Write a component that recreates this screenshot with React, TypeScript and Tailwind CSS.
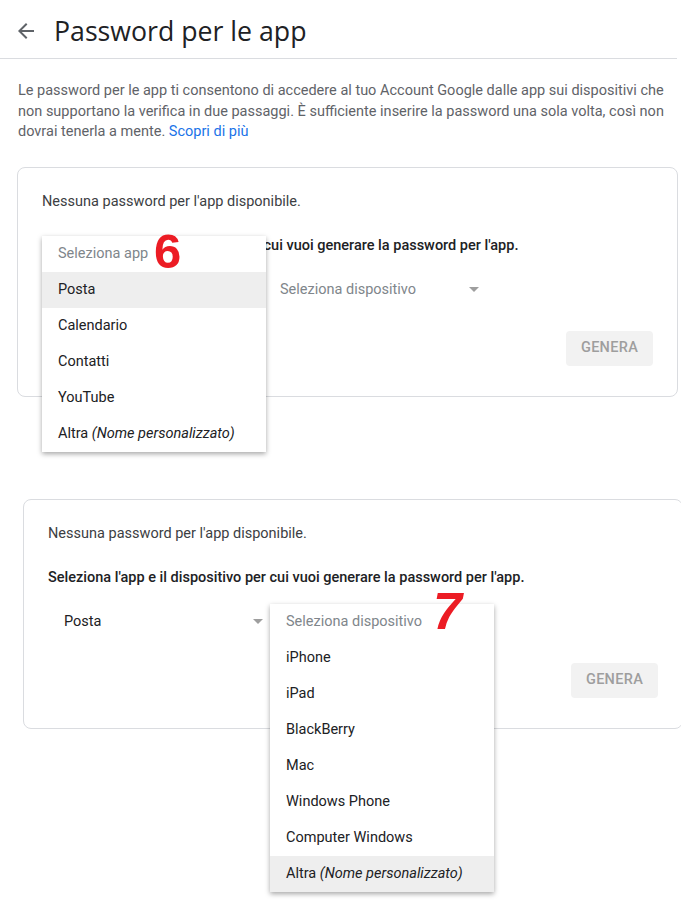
import React from "react";

const font = { fontFamily: "Roboto, 'Liberation Sans', Arial, sans-serif" };

function Caret() {
  return (
    <svg width="10" height="5" viewBox="0 0 10 5" className="shrink-0">
      <path d="M0 0 L10 0 L5 5 Z" fill="#9e9e9e" />
    </svg>
  );
}

function Select({ label, muted }: { label: string; muted?: boolean }) {
  return (
    <div className="w-[222px] h-[36px] flex items-center pl-4 pr-[7px] justify-between">
      <span className={muted ? "text-[#80868b]" : "text-[#202124]"}>{label}</span>
      <Caret />
    </div>
  );
}

function Menu({
  header,
  items,
  active,
}: {
  header: string;
  items: React.ReactNode[];
  active: number;
}) {
  return (
    <div className="w-[224px] bg-white shadow-[0_2px_5px_rgba(0,0,0,0.35)]">
      <div className="h-[36px] flex items-center pl-4 text-[#80868b]">{header}</div>
      {items.map((it, i) => (
        <div
          key={i}
          className={
            "h-[36px] flex items-center pl-4 text-[#202124] " +
            (i === active ? "bg-[#eeeeee]" : "")
          }
        >
          {it}
        </div>
      ))}
    </div>
  );
}

const altra = (
  <span>
    Altra <i>(Nome personalizzato)</i>
  </span>
);

function Card({
  className,
  first,
  second,
  children,
}: {
  className: string;
  first: React.ReactNode;
  second: React.ReactNode;
  children?: React.ReactNode;
}) {
  return (
    <div
      className={
        "relative h-[230px] rounded-lg border border-[#dadce0] pl-[24px] pr-[24px] pt-[24px] " +
        className
      }
    >
      <p className="leading-5 text-[#3c4043]">Nessuna password per l'app disponibile.</p>
      <p className="mt-[24px] leading-5 font-medium text-[#202124] whitespace-nowrap">
        Seleziona l'app e il dispositivo per cui vuoi generare la password per l'app.
      </p>
      <div className="mt-[16px] flex">
        {first}
        {second}
      </div>
      <div className="mt-[23px] flex justify-end">
        <div className="w-[87px] h-[35px] rounded bg-[#f2f2f2] flex items-center justify-center text-[#9e9e9e] font-medium tracking-[0.3px]">
          GENERA
        </div>
      </div>
      {children}
    </div>
  );
}

export default function App() {
  return (
    <div className="w-[681px] h-[900px] overflow-hidden bg-white text-[14.5px]" style={font}>
      <div className="w-[677px] h-[59px] border-b border-[#dadce0] flex items-center">
        <svg width="24" height="24" viewBox="0 0 24 24" className="ml-[14px] mt-[4px]">
          <path
            d="M20 11H7.83l5.59-5.59L12 4l-8 8 8 8 1.41-1.41L7.83 13H20v-2z"
            fill="#5f6368"
          />
        </svg>
        <h1
          className="ml-[16px] mt-[4px] text-[26.7px] leading-none text-[#202124]"
          style={{ fontFamily: "'Open Sans', Roboto, sans-serif" }}
        >
          Password per le app
        </h1>
      </div>

      <p className="ml-[18px] mt-[22px] w-[662px] leading-[20.5px] text-[#5f6368]">
        Le password per le app ti consentono di accedere al tuo Account Google dalle app sui dispositivi che
        <br />
        non supportano la verifica in due passaggi. È sufficiente inserire la password una sola volta, così non
        <br />
        dovrai tenerla a mente. <span className="text-[#1a73e8]">Scopri di più</span>
      </p>

      <Card
        className="ml-[17px] w-[661px] mt-[24px]"
        first={<Select label="Seleziona app" muted />}
        second={<Select label="Seleziona dispositivo" muted />}
      >
        <div className="absolute left-[24px] top-[68px] z-10">
          <Menu
            header="Seleziona app"
            items={["Posta", "Calendario", "Contatti", "YouTube", altra]}
            active={0}
          />
          <span
            className="absolute left-[112px] top-[-9px] text-[49px] leading-none font-bold text-[#ec1c24]"
            style={{ fontFamily: "'Liberation Sans', Arial, sans-serif" }}
          >
            6
          </span>
        </div>
      </Card>

      <Card
        className="ml-[23px] w-[660px] mt-[102px]"
        first={<Select label="Posta" />}
        second={<Select label="Seleziona dispositivo" muted />}
      >
        <div className="absolute left-[246px] top-[104px] z-10">
          <Menu
            header="Seleziona dispositivo"
            items={[
              "iPhone",
              "iPad",
              "BlackBerry",
              "Mac",
              "Windows Phone",
              "Computer Windows",
              altra,
            ]}
            active={6}
          />
          <span
            className="absolute left-[163px] top-[-19px] text-[52px] leading-none font-bold italic text-[#ec1c24]"
            style={{ fontFamily: "'Liberation Sans', Arial, sans-serif" }}
          >
            7
          </span>
        </div>
      </Card>
    </div>
  );
}
